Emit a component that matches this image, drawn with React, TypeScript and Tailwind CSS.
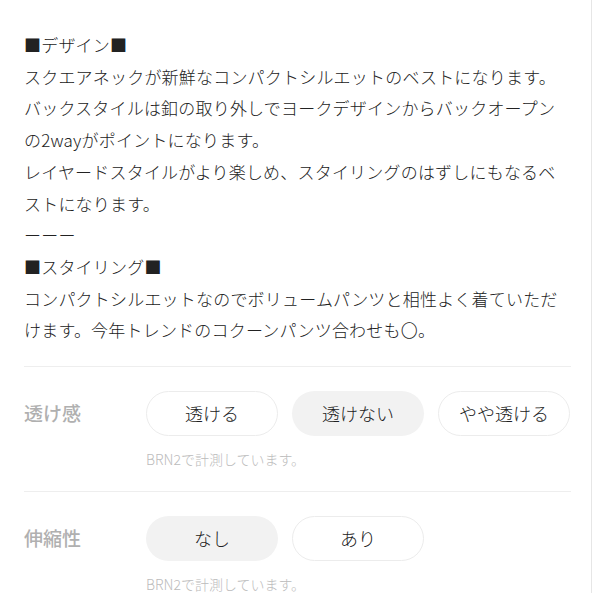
import React from "react";

const lines = [
  "■デザイン■",
  "スクエアネックが新鮮なコンパクトシルエットのベストになります。",
  "バックスタイルは釦の取り外しでヨークデザインからバックオープン",
  "の2wayがポイントになります。",
  "レイヤードスタイルがより楽しめ、スタイリングのはずしにもなるベ",
  "ストになります。",
  "ーーー",
  "■スタイリング■",
  "コンパクトシルエットなのでボリュームパンツと相性よく着ていただ",
  "けます。今年トレンドのコクーンパンツ合わせも〇。",
];

const Pill: React.FC<{ label: string; active?: boolean }> = ({ label, active }) => (
  <div
    className={`flex h-[45px] w-[132px] items-center justify-center rounded-full text-[18px] font-light text-[#222] ${
      active ? "bg-[#f2f2f2]" : "border border-[#ececec] bg-white"
    }`}
  >
    {label}
  </div>
);

const SpecRow: React.FC<{ title: string; options: { label: string; active?: boolean }[] }> = ({
  title,
  options,
}) => (
  <div className="pt-6">
    <div className="flex items-center">
      <div className="w-[122px] text-[19px] font-medium text-[#b0b0b0]">{title}</div>
      <div className="flex gap-[14px]">
        {options.map((o) => (
          <Pill key={o.label} {...o} />
        ))}
      </div>
    </div>
    <div className="ml-[122px] mt-[14px] text-[14px] font-light leading-[18px] text-[#bbb]">
      BRN2で計測しています。
    </div>
  </div>
);

export default function App() {
  return (
    <div
      className="h-[593px] w-[593px] overflow-hidden bg-white"
      style={{ fontFamily: '"Noto Sans CJK JP", "Noto Sans", sans-serif' }}
    >
      <div className="h-full w-[592px] border-r border-[#e6e6e6] pl-6 pr-5 pt-[29px]">
        <div className="text-[17px] font-light leading-[31.7px] tracking-[0.2px] text-[#222]">
          {lines.map((l, i) => (
            <div key={i} className="whitespace-nowrap">
              {l}
            </div>
          ))}
        </div>
        <div className="mt-[20px] border-t border-[#eeeeee]" />
        <SpecRow
          title="透け感"
          options={[{ label: "透ける" }, { label: "透けない", active: true }, { label: "やや透ける" }]}
        />
        <div className="mt-[23px] border-t border-[#eeeeee]" />
        <SpecRow title="伸縮性" options={[{ label: "なし", active: true }, { label: "あり" }]} />
      </div>
    </div>
  );
}
